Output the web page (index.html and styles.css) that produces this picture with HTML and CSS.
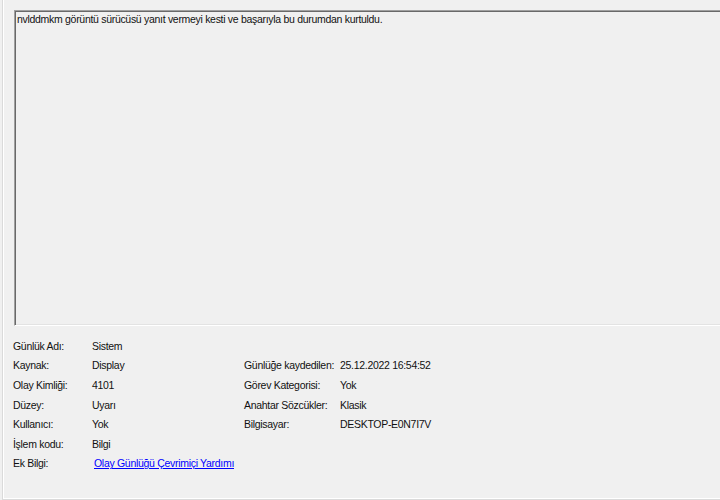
FILE: index.html
```html
<!doctype html>
<html>
  <head>
    <meta charset="utf-8">
    <title>Olay Özellikleri</title>
    <link rel="stylesheet" href="styles.css">
  </head>
  <body>
    <div class="panel">
      <div class="desc">nvlddmkm görüntü sürücüsü yanıt vermeyi kesti ve başarıyla bu durumdan kurtuldu.</div>
      <div class="fields">
        <span class="lbl">Günlük Adı:</span><span class="val">Sistem</span><span></span><span></span>
        <span class="lbl">Kaynak:</span><span class="val">Display</span><span class="lbl">Günlüğe kaydedilen:</span><span class="val">25.12.2022 16:54:52</span>
        <span class="lbl">Olay Kimliği:</span><span class="val">4101</span><span class="lbl">Görev Kategorisi:</span><span class="val">Yok</span>
        <span class="lbl">Düzey:</span><span class="val">Uyarı</span><span class="lbl">Anahtar Sözcükler:</span><span class="val">Klasik</span>
        <span class="lbl">Kullanıcı:</span><span class="val">Yok</span><span class="lbl">Bilgisayar:</span><span class="val">DESKTOP-E0N7I7V</span>
        <span class="lbl">İşlem kodu:</span><span class="val">Bilgi</span><span></span><span></span>
        <span class="lbl">Ek Bilgi:</span><span class="val"><a class="help" href="#">Olay Günlüğü Çevrimiçi Yardımı</a></span><span></span><span></span>
      </div>
    </div>
  </body>
</html>
```

FILE: styles.css
```css
html, body { margin: 0; padding: 0; }
body { background: #f0f0f0; color: #111; font-family: "Liberation Sans", Arial, sans-serif; font-size: 10.5px; letter-spacing: -0.3px; overflow: hidden; width: 720px; height: 500px; }
.panel { margin-left: 2px; height: 489px; padding-top: 10px; border-left: 1px solid #dadada; border-bottom: 1px solid #dadada; box-shadow: inset 1px 0 0 #fff, inset 0 -1px 0 #fff; }
.desc { margin-left: 11px; height: 313px; padding: 1px 0 0 2px; line-height: 14px; white-space: nowrap; border-top: 1px solid #a0a0a0; border-left: 1px solid #a0a0a0; border-bottom: 1px solid #fff; box-shadow: inset 1px 1px 0 #696969, inset 0 -1px 0 #e3e3e3; }
.fields { display: grid; grid-template-columns: 79px 152px 96px 1fr; grid-auto-rows: 19.6px; align-items: center; margin: 10px 0 0 10px; white-space: nowrap; }
.help { color: #0000ff; margin-left: 2px; }
```
